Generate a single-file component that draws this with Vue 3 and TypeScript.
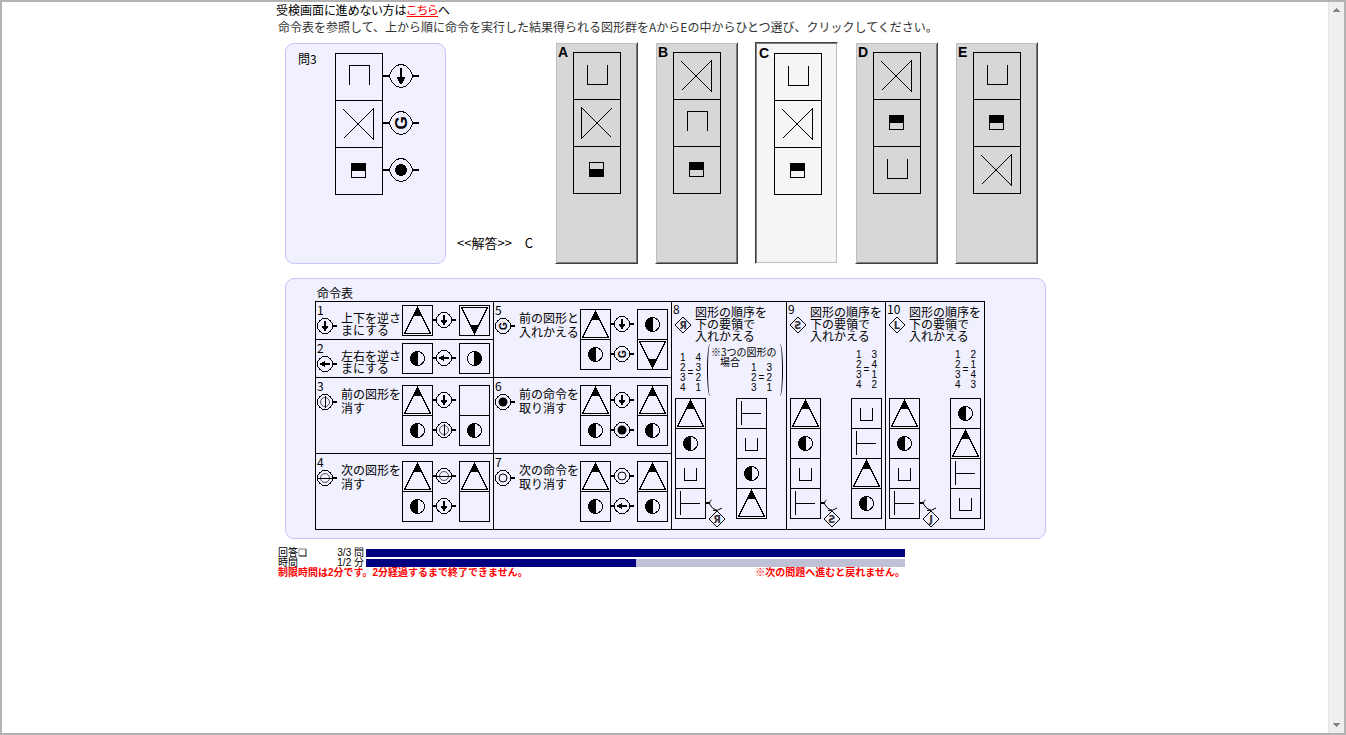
<script setup lang="ts">
import { ref } from 'vue'

interface Option {
  id: string
  figures: string[]
}

interface Step {
  shapes: [string, string]
  icon: string
}

interface Command {
  no: number
  icon: string
  lines: string[]
  steps: Step[]
  span?: number
}

interface Reorder {
  no: number
  icon: string
  tag: string
  from: number[]
  to: number[]
  before: string[]
  after: string[]
  three?: boolean
}

const question = [
  { figure: 'cap', icon: 'down' },
  { figure: 'bowtie', icon: 'swap' },
  { figure: 'half-top', icon: 'undo' },
]

const options: Option[] = [
  { id: 'A', figures: ['cup', 'bowtie-left', 'half-bottom'] },
  { id: 'B', figures: ['bowtie', 'cap', 'half-top'] },
  { id: 'C', figures: ['cup', 'bowtie', 'half-top'] },
  { id: 'D', figures: ['bowtie', 'half-top', 'cup'] },
  { id: 'E', figures: ['cup', 'half-top', 'bowtie'] },
]

const rows: Command[][] = [
  [
    { no: 1, icon: 'down', lines: ['上下を逆さ', 'まにする'], steps: [{ shapes: ['tri', 'tri-down'], icon: 'down' }] },
    {
      no: 5,
      icon: 'swap',
      lines: ['前の図形と', '入れかえる'],
      span: 2,
      steps: [
        { shapes: ['tri', 'moon'], icon: 'down' },
        { shapes: ['moon', 'tri-down'], icon: 'swap' },
      ],
    },
  ],
  [{ no: 2, icon: 'left', lines: ['左右を逆さ', 'まにする'], steps: [{ shapes: ['moon', 'moon-right'], icon: 'left' }] }],
  [
    {
      no: 3,
      icon: 'erase-prev',
      lines: ['前の図形を', '消す'],
      steps: [
        { shapes: ['tri', ''], icon: 'down' },
        { shapes: ['moon', 'moon'], icon: 'erase-prev' },
      ],
    },
    {
      no: 6,
      icon: 'undo',
      lines: ['前の命令を', '取り消す'],
      steps: [
        { shapes: ['tri', 'tri'], icon: 'down' },
        { shapes: ['moon', 'moon'], icon: 'undo' },
      ],
    },
  ],
  [
    {
      no: 4,
      icon: 'erase-next',
      lines: ['次の図形を', '消す'],
      steps: [
        { shapes: ['tri', 'tri'], icon: 'erase-next' },
        { shapes: ['moon', ''], icon: 'down' },
      ],
    },
    {
      no: 7,
      icon: 'skip',
      lines: ['次の命令を', '取り消す'],
      steps: [
        { shapes: ['tri', 'tri'], icon: 'skip' },
        { shapes: ['moon', 'moon'], icon: 'left' },
      ],
    },
  ],
]

const start = ['tri', 'moon', 'bowl', 'tee']

const reorders: Reorder[] = [
  { no: 8, icon: 'Я', tag: 'Я', from: [1, 2, 3, 4], to: [4, 3, 2, 1], before: start, after: ['tee', 'bowl', 'moon', 'tri'], three: true },
  { no: 9, icon: 'Ƨ', tag: 'Ƨ', from: [1, 2, 3, 4], to: [3, 4, 1, 2], before: start, after: ['bowl', 'tee', 'tri', 'moon'] },
  { no: 10, icon: 'L', tag: 'J', from: [1, 2, 3, 4], to: [2, 1, 4, 3], before: start, after: ['moon', 'tri', 'tee', 'bowl'] },
]

const progress = [
  { label: '回答❏', value: '3/3 問', percent: 100 },
  { label: '時間', value: '1/2 分', percent: 50 },
]

const answer = ref('C')
</script>

<template>
  <div class="frame">
    <svg class="defs" aria-hidden="true">
      <defs>
        <g id="cup" class="line"><path d="M14.5 13V32.5H34.5V13" /></g>
        <g id="cap" class="line"><path d="M14.5 32V12.5H34.5V32" /></g>
        <g id="bowtie" class="line"><path d="M8.5 9.5L38.5 39.5V8.5L8.5 38.5" /></g>
        <g id="bowtie-left" class="line"><path d="M38.5 9.5L8.5 39.5V8.5L38.5 38.5" /></g>
        <g id="half-top" class="line"><rect x="16.5" y="16.5" width="14" height="14" /><path class="solid" d="M16.5 16.5h14v7h-14z" /></g>
        <g id="half-bottom" class="line"><rect x="16.5" y="16.5" width="14" height="14" /><path class="solid" d="M16.5 23.5h14v7h-14z" /></g>

        <g id="tri" class="line"><path d="M15.5 2.5L2.5 28.5H28.5Z" /><path class="solid" d="M15.5 2.5L11.5 10.5H19.5Z" /></g>
        <g id="tri-down" class="line"><path d="M15.5 28.5L2.5 2.5H28.5Z" /><path class="solid" d="M15.5 28.5L11.5 20.5H19.5Z" /></g>
        <g id="moon" class="line"><circle cx="15.5" cy="15.5" r="7" /><path class="solid" d="M15.5 8.5A7 7 0 0 0 15.5 22.5Z" /></g>
        <g id="moon-right" class="line"><circle cx="15.5" cy="15.5" r="7" /><path class="solid" d="M15.5 8.5A7 7 0 0 1 15.5 22.5Z" /></g>
        <g id="bowl" class="line"><path d="M9.5 10V22.5H21.5V10" /></g>
        <g id="tee" class="line"><path d="M5.5 3V27M5.5 15.5H25" /></g>

        <g id="big-ring" class="line"><path d="M-12 0Q-7.5 -11.5 0 -11.5Q7.5 -11.5 12 0Q7.5 11.5 0 11.5Q-7.5 11.5 -12 0Z" /><path class="thick" d="M-18 0H-12M12 0H18" /></g>
        <g id="big-down"><path d="M-1 -8H1V1H4.5L1 8H-1L-4.5 1H-1Z" /></g>
        <g id="big-swap"><text class="swap-big" text-anchor="middle" transform="rotate(-90)" y="6">G</text></g>
        <g id="big-undo"><circle r="6" /></g>

        <g id="ring" class="line"><circle r="7.5" /><path class="thick" d="M8 0H12" /></g>
        <g id="down"><path d="M-1 -5H1V0H3.5L0.5 5H-0.5L-3.5 0H-1Z" /></g>
        <g id="left"><path d="M5 -1V1H0V3L-5 0.5V-0.5L0 -3V-1Z" /></g>
        <g id="swap"><text class="swap" text-anchor="middle" transform="rotate(-90)" y="4">G</text></g>
        <g id="undo" class="smooth"><circle r="4.5" /></g>
        <g id="skip" class="line smooth"><circle r="4" /></g>
        <g id="erase-prev" class="line"><circle class="grey smooth" r="4.5" /><path d="M0.5 -6V6" /></g>
        <g id="erase-next" class="line"><circle class="grey smooth" r="4.5" /><path d="M-7 0.5H7" /></g>
      </defs>
    </svg>

    <main class="page">
      <div class="content">
        <p class="help">受検画面に進めない方は<a href="#">こちら</a>へ</p>
        <p class="lead">命令表を参照して、上から順に命令を実行した結果得られる図形群をAからEの中からひとつ選び、クリックしてください。</p>

        <div class="exam">
          <section class="panel question">
            <h1>問3</h1>
            <svg width="86" height="142" viewBox="0 0 86 142" role="img" aria-label="問題の図形">
              <g v-for="(q, i) in question" :key="i" :transform="`translate(0 ${i * 47})`">
                <rect class="line" x="0.5" y="0.5" width="47" height="47" />
                <use :href="'#' + q.figure" />
                <g transform="translate(66 23)">
                  <use href="#big-ring" />
                  <use :href="'#big-' + q.icon" />
                </g>
              </g>
            </svg>
          </section>

          <p class="answer">&lt;&lt;解答&gt;&gt;　{{ answer }}</p>

          <div class="options">
            <button
              v-for="o in options"
              :key="o.id"
              type="button"
              class="option"
              :class="{ chosen: o.id === answer }"
              :aria-pressed="o.id === answer"
              @click="answer = o.id"
            >
              <span class="letter">{{ o.id }}</span>
              <svg width="48" height="142" viewBox="0 0 48 142" aria-hidden="true">
                <g v-for="(f, i) in o.figures" :key="i" :transform="`translate(0 ${i * 47})`">
                  <rect class="line" x="0.5" y="0.5" width="47" height="47" />
                  <use :href="'#' + f" />
                </g>
              </svg>
            </button>
          </div>
        </div>

        <section class="panel rules">
          <table>
            <caption>命令表</caption>
            <colgroup>
              <col class="wide" /><col class="wide" /><col class="eight" /><col class="narrow" /><col class="narrow" />
            </colgroup>
            <tbody>
              <tr v-for="(row, r) in rows" :key="r" :class="r < 2 ? 'short' : 'tall'">
                <td v-for="c in row" :key="c.no" :rowspan="c.span ?? 1">
                  <div class="command" :class="{ single: c.steps.length === 1 }">
                    <div class="mark">
                      <span>{{ c.no }}</span>
                      <svg width="21" height="17" viewBox="-8 -8 21 17" aria-hidden="true">
                        <use href="#ring" /><use :href="'#' + c.icon" />
                      </svg>
                    </div>
                    <p><span v-for="l in c.lines" :key="l">{{ l }}</span></p>
                    <svg class="steps" width="88" :height="c.steps.length * 30 + 1" aria-hidden="true">
                      <g v-for="(s, i) in c.steps" :key="i" :transform="`translate(0 ${i * 30})`">
                        <rect class="line" x="0.5" y="0.5" width="30" height="30" />
                        <use v-if="s.shapes[0]" :href="'#' + s.shapes[0]" />
                        <path class="thick" d="M31 15H35" />
                        <g transform="translate(42 15)"><use href="#ring" /><use :href="'#' + s.icon" /></g>
                        <g transform="translate(57 0)">
                          <rect class="line" x="0.5" y="0.5" width="30" height="30" />
                          <use v-if="s.shapes[1]" :href="'#' + s.shapes[1]" />
                        </g>
                      </g>
                    </svg>
                  </div>
                </td>
                <template v-if="r === 0">
                  <td v-for="c in reorders" :key="c.no" rowspan="4">
                    <div class="reorder">
                      <div class="head">
                        <div class="mark">
                          <span>{{ c.no }}</span>
                          <svg width="17" height="17" viewBox="-8 -8 17 17" aria-hidden="true">
                            <path class="line smooth" d="M0 -8L8 0L0 8L-8 0Z" />
                            <text class="glyph" text-anchor="middle" y="4">{{ c.icon }}</text>
                          </svg>
                        </div>
                        <p><span>図形の順序を</span><span>下の要領で</span><span>入れかえる</span></p>
                      </div>
                      <div class="maps" :class="{ wide: c.three }">
                        <div class="map">
                          <span><i v-for="n in c.from" :key="n">{{ n }}</i></span>
                          <span>=</span>
                          <span><i v-for="n in c.to" :key="n">{{ n }}</i></span>
                        </div>
                        <div v-if="c.three" class="note">
                          <p><span>※3つの図形の</span><span class="indent">場合</span></p>
                          <div class="map">
                            <span><i>1</i><i>2</i><i>3</i></span>
                            <span>=</span>
                            <span><i>3</i><i>2</i><i>1</i></span>
                          </div>
                        </div>
                      </div>
                      <svg class="stack" width="92" height="131" viewBox="0 0 92 131" aria-hidden="true">
                        <g v-for="(s, i) in c.before" :key="s" :transform="`translate(0 ${i * 30})`">
                          <rect class="line" x="0.5" y="0.5" width="30" height="30" />
                          <use :href="'#' + s" />
                        </g>
                        <g v-for="(s, i) in c.after" :key="s" :transform="`translate(61 ${i * 30})`">
                          <rect class="line" x="0.5" y="0.5" width="30" height="30" />
                          <use :href="'#' + s" />
                        </g>
                        <path class="thick" d="M31 105H34" />
                        <path class="line smooth" d="M36.5 102Q34 103 34.5 106Q37 111 42 112.5M47 110Q43 113 38 112.5" />
                        <g transform="translate(42 121)">
                          <path class="line smooth" d="M0 -8L8 0L0 8L-8 0Z" />
                          <text class="glyph" text-anchor="middle" y="4">{{ c.tag }}</text>
                        </g>
                      </svg>
                    </div>
                  </td>
                </template>
              </tr>
            </tbody>
          </table>
        </section>

        <footer>
          <div v-for="p in progress" :key="p.label" class="meter">
            <span>{{ p.label }}</span>
            <span class="value">{{ p.value }}</span>
            <div class="track"><div class="fill" :style="{ width: p.percent + '%' }"></div></div>
          </div>
          <div class="notes">
            <p>制限時間は2分です。2分経過するまで終了できません。</p>
            <p>※次の問題へ進むと戻れません。</p>
          </div>
        </footer>
      </div>
    </main>

    <div class="scroll">
      <button type="button" aria-label="上へ"><svg width="8" height="4" viewBox="0 0 8 4"><path d="M0 4L4 0L8 4Z" /></svg></button>
      <button type="button" aria-label="下へ"><svg width="8" height="4" viewBox="0 0 8 4"><path d="M0 0L4 4L8 0Z" /></svg></button>
    </div>
  </div>
</template>

<style>
body {
  margin: 0;
}
</style>

<style scoped>
.frame {
  display: flex;
  box-sizing: border-box;
  min-height: 100vh;
  border: 2px solid #b2b2b2;
  background: #fff;
  color: #000;
  font: 12px/12px "Noto Sans CJK JP", sans-serif;
}
.defs {
  position: absolute;
  width: 0;
  height: 0;
}
p,
h1 {
  margin: 0;
  font-size: 12px;
  font-weight: 400;
}
svg {
  display: block;
  flex: none;
  overflow: visible;
  shape-rendering: crispEdges;
}
.smooth {
  shape-rendering: geometricPrecision;
}
.line {
  fill: none;
  stroke: #000;
  stroke-width: 1;
}
.solid {
  fill: #000;
}
.thick {
  stroke: #000;
  stroke-width: 2;
}
.grey {
  stroke: #555;
}
.swap-big {
  font: bold 17px/1 "Liberation Sans", sans-serif;
}
.swap {
  font: bold 10px/1 "Liberation Sans", sans-serif;
}
.glyph {
  font: bold 10px/1 "DejaVu Sans", sans-serif;
  fill: #333;
}

.page {
  flex: 1;
}
.content {
  width: 780px;
  margin: 0 auto;
}
.help {
  padding: 1px 0 0 1px;
  line-height: 14px;
  font-feature-settings: "palt";
}
.help a {
  color: #f00;
}
.lead {
  padding: 2px 0 0 3px;
  line-height: 16px;
  color: #333;
  white-space: nowrap;
}

.panel {
  box-sizing: border-box;
  border: 1px solid #c6c3fd;
  border-radius: 9px;
  background: #f0f0ff;
}
.exam {
  display: flex;
  align-items: flex-start;
  padding: 7px 0 0 10px;
}
.question {
  display: flex;
  gap: 19px;
  width: 161px;
  height: 221px;
  margin-top: 1px;
  padding: 9px 12px;
}
.question h1 {
  width: 18px;
  white-space: nowrap;
}
.answer {
  align-self: flex-end;
  width: 98px;
  margin-left: 11px;
  padding-bottom: 14px;
  font-size: 13px;
  line-height: 14px;
  white-space: nowrap;
}
.options {
  display: flex;
  gap: 17px;
}
.option {
  display: flex;
  align-items: flex-start;
  box-sizing: border-box;
  width: 83px;
  height: 222px;
  padding: 9px 0 0 2px;
  border: 1px solid;
  border-color: #fff #404040 #404040 #fff;
  background: #d7d7d7;
  box-shadow: inset 1px 1px #bebebe, inset -1px -1px #7c7c7c;
  color: #000;
  font: bold 14px/14px "Liberation Sans", sans-serif;
  text-align: left;
}
.option.chosen {
  padding: 10px 0 0 3px;
  border-color: #404040 #fff #fff #404040;
  background: #f5f5f5;
  box-shadow: inset 1px 1px #808080, inset -1px -1px #bebebe;
}
.letter {
  width: 15px;
  margin-top: -7px;
}

.rules {
  width: 761px;
  margin: 14px 0 0 10px;
  padding: 8px 0 8px 29px;
}
table {
  table-layout: fixed;
  width: 670px;
  border: 1px solid #000;
  border-width: 1px 0 0 1px;
  border-spacing: 0;
}
caption {
  padding: 0 2px 2px;
  text-align: left;
}
.wide {
  width: 178px;
}
.eight {
  width: 115px;
}
.narrow {
  width: 99px;
}
.short {
  height: 38px;
}
.tall {
  height: 76px;
}
td {
  box-sizing: border-box;
  padding: 0;
  border: 1px solid #000;
  border-width: 0 1px 1px 0;
  vertical-align: top;
}
.command {
  display: flex;
}
.mark {
  display: flex;
  flex-direction: column;
  gap: 2px;
  width: 25px;
  padding: 2px 0 0 1px;
  box-sizing: border-box;
}
.command p {
  flex: 1;
  padding-top: 9px;
  line-height: 14px;
}
p span,
i {
  display: block;
  white-space: nowrap;
  font-style: normal;
}
.steps {
  margin: 7px 3px 0 0;
}
.single p {
  padding-top: 10px;
  line-height: 12px;
}
.single .steps {
  margin-top: 3px;
}
.reorder .head {
  display: flex;
}
.reorder .mark {
  width: 23px;
  padding: 1px 0 0 1px;
}
.reorder .mark svg {
  margin-left: 2px;
}
.reorder .head p {
  padding-top: 4px;
}
.maps {
  display: flex;
  justify-content: flex-end;
  height: 56px;
  padding: 8px 8px 0 8px;
  box-sizing: border-box;
}
.maps.wide {
  justify-content: flex-start;
  padding-top: 11px;
}
.map {
  display: flex;
  align-items: center;
  gap: 2px;
  height: 40px;
  font: 10px/10px "Liberation Sans", sans-serif;
}
.note {
  position: relative;
  margin: -9px 0 0 6px;
  width: 76px;
  height: 52px;
  padding: 3px 0 0 4px;
  box-sizing: border-box;
  flex: none;
}
.note::before,
.note::after {
  content: "";
  position: absolute;
  top: 0;
  bottom: 0;
  left: 0;
  width: 5px;
  border-left: 1px solid #000;
  border-radius: 50% 0 0 50%;
}
.note::after {
  left: auto;
  right: 0;
  border: 0 solid #000;
  border-right-width: 1px;
  border-radius: 0 50% 50% 0;
}
.note p {
  font-size: 10px;
  line-height: 10px;
}
.note .indent {
  padding-left: 9px;
}
.note .map {
  height: 30px;
  margin: -4px 0 0 40px;
}
.stack {
  margin: 0 0 0 3px;
}

footer {
  width: 627px;
  padding: 9px 0 0 3px;
  font: 10px/10px "Liberation Sans", "Noto Sans CJK JP", sans-serif;
}
.meter {
  display: flex;
  align-items: center;
  height: 10px;
}
.meter span {
  width: 40px;
  white-space: nowrap;
}
.meter .value {
  width: 46px;
  text-align: right;
}
.track {
  flex: 1;
  height: 8px;
  margin-left: 2px;
  background: #c0c0d6;
}
.fill {
  height: 8px;
  background: #000080;
}
.notes {
  display: flex;
  justify-content: space-between;
  color: #f00;
}
.notes p {
  font-size: 10px;
  font-weight: 700;
  white-space: nowrap;
}

.scroll {
  display: flex;
  flex-direction: column;
  justify-content: space-between;
  width: 16px;
  background: #efefef;
  box-shadow: inset 1px 0 #e4e4e4;
}
.scroll button {
  display: flex;
  justify-content: center;
  align-items: center;
  height: 16px;
  padding: 0;
  border: 0;
  background: none;
}
.scroll path {
  fill: #858585;
}
</style>
